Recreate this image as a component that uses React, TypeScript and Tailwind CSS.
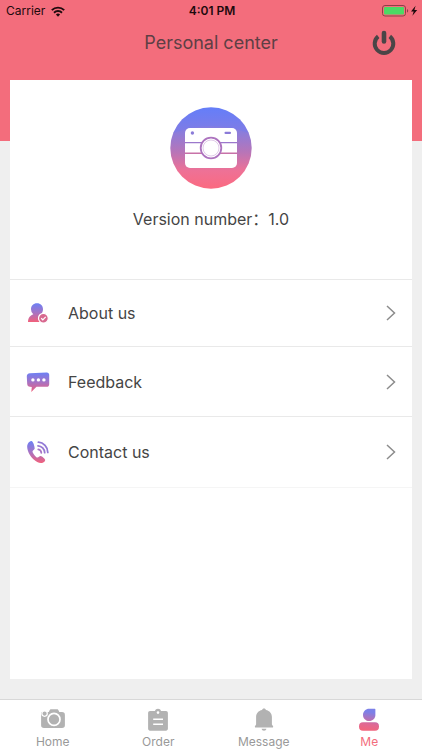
import React from 'react';
import { clsx } from 'clsx';

interface IconProps {
  className?: string;
}

interface MenuItem {
  label: string;
  icon: React.FC<IconProps>;
  rowClass: string;
}

interface TabItem {
  label: string;
  icon: React.FC<IconProps>;
  active?: boolean;
}

// Shared blue-to-pink gradient, each icon needs its own id
const BrandGradient = ({ id }: { id: string }) => (
  <defs>
    <linearGradient id={id} x1="0" y1="0" x2="0" y2="1">
      <stop offset="0" stopColor="#6c80f5" />
      <stop offset="0.5" stopColor="#a673c4" />
      <stop offset="1" stopColor="#f2607a" />
    </linearGradient>
  </defs>
);

const WifiIcon = ({ className }: IconProps) => (
  <svg viewBox="0 0 14 11" className={className} fill="none" stroke="#1d0a0d" strokeWidth="1.9">
    <path d="M0.8 4.1a8.9 8.9 0 0 1 12.4 0" />
    <path d="M3 6.7a5.7 5.7 0 0 1 8 0" />
    <path d="M7 10.7 4.9 8.5a3 3 0 0 1 4.2 0z" fill="#1d0a0d" stroke="none" />
  </svg>
);

const BatteryIcon = ({ className }: IconProps) => (
  <svg viewBox="0 0 36 12" className={className}>
    <rect x="0.5" y="0.5" width="23" height="10.5" rx="2.5" fill="none" stroke="#8f3f48" />
    <rect x="2" y="2" width="20" height="7.5" rx="1" fill="#4cd964" />
    <path d="M25 4v3.6c1.6-.5 1.6-3.1 0-3.6z" fill="#8f3f48" />
    <path d="M33.6 0.8 29 6.6h2.7l-1.3 4.2L35.2 5h-2.8z" fill="#1d0a0d" />
  </svg>
);

const PowerIcon = ({ className }: IconProps) => (
  <svg viewBox="0 0 24 26" className={className} fill="none" stroke="#4a4547">
    <path d="M6.2 6.4a9.3 9.3 0 1 0 11.6 0" strokeWidth="4" />
    <path d="M12 3v8.5" strokeWidth="4.6" strokeLinecap="round" />
  </svg>
);

const AppLogo = ({ className }: IconProps) => (
  <svg viewBox="0 0 82 82" className={className} role="img" aria-label="Camera logo">
    <defs>
      <linearGradient id="logo" x1="0" y1="0" x2="0" y2="1">
        <stop offset="0" stopColor="#667ff8" />
        <stop offset="0.3" stopColor="#8a7ddc" />
        <stop offset="0.55" stopColor="#b775b8" />
        <stop offset="0.78" stopColor="#ee7196" />
        <stop offset="1" stopColor="#fb6a80" />
      </linearGradient>
    </defs>
    <circle cx="41" cy="41" r="40.7" fill="url(#logo)" />
    <path d="M3.5 26Q41 12 78.5 26A40.7 40.7 0 0 0 3.5 26z" fill="#5f7cff" opacity="0.25" />
    <rect x="15" y="21" width="52" height="40" rx="5" fill="#fff" />
    <circle cx="22.4" cy="26" r="1.7" fill="#8b7bd8" />
    <rect x="54.5" y="24.8" width="6.5" height="2.2" rx="1" fill="#8b7bd8" />
    <path d="M15 35.6h52" stroke="#9b78cc" strokeWidth="1.4" />
    <path d="M15 46.2h52" stroke="#c872a8" strokeWidth="1.4" />
    <circle cx="41" cy="41" r="10.3" fill="#fff" stroke="#ad74bf" strokeWidth="1.8" />
    <circle cx="41" cy="41" r="8" fill="none" stroke="#d3b4de" strokeWidth="0.7" />
  </svg>
);

const AboutIcon = ({ className }: IconProps) => (
  <svg viewBox="0 0 24 24" className={className}>
    <BrandGradient id="about" />
    <path
      d="M11 2.3c3.6 0 6 2.6 6 5.9 0 2.2-.9 4-2.3 5.100 2.600.9 5.300 3.400 5.300 7.700H2c0-4.300 2.700-6.800 5.300-7.700A6.600 6.600 0 0 1 5 8.200c0-3.300 2.400-5.900 6-5.900z"
      fill="url(#about)"
    />
    <circle cx="17.4" cy="17.2" r="4.9" fill="#d8688f" stroke="#fff" strokeWidth="1.2" />
    <path d="m15.2 17.3 1.600 1.500 2.900-3" fill="none" stroke="#fff" strokeWidth="1.2" />
  </svg>
);

const FeedbackIcon = ({ className }: IconProps) => (
  <svg viewBox="0 0 24 24" className={className}>
    <BrandGradient id="feedback" />
    <path
      d="M4 3.2 20.5 2.4c1.7-.1 2.7.8 2.7 2.4v9.4c0 1.6-1 2.6-2.7 2.6h-10L5.3 22l.5-4.9-1.9-.3C2.3 16.6 1.400 15.800 1.200 14L.8 6.500C.7 4.500 1.900 3.300 4 3.200z"
      fill="url(#feedback)"
    />
    <circle cx="6.9" cy="9.9" r="1.7" fill="#fff" />
    <circle cx="12.4" cy="9.9" r="1.7" fill="#fff" />
    <circle cx="17.9" cy="9.9" r="1.7" fill="#fff" />
  </svg>
);

const ContactIcon = ({ className }: IconProps) => (
  <svg viewBox="0 0 24 24" className={className}>
    <BrandGradient id="contact" />
    <path
      d="M5.2 1C3 1.5 1 4 1.2 7.3c.3 4.4 3 9 6.2 12 3.2 2.900 6.500 4.500 9.300 3.500 1.300-.5 2.500-1.600 2.500-2.800 0-.8-3.200-3.700-4.500-3.900-1.300-.2-2.200 1.700-3.300 1.500-1.600-.3-4.900-4.600-4.900-6.200 0-1.200 2.200-1.700 2.200-3C8.700 6.800 7.200.7 5.200 1z"
      fill="url(#contact)"
    />
    <g fill="none" strokeWidth="1.8" strokeLinecap="round">
      <path d="M12.3 9.3c1.6.3 2.9 1.7 3 3.5" stroke="#a774c6" />
      <path d="M12 5.8c3.6.2 6.600 3 6.700 6.900" stroke="#9878d2" />
      <path d="M12.4 2.2c5.100.3 9.400 4.700 9.400 10.200" stroke="#9179d6" />
    </g>
  </svg>
);

const ChevronIcon = ({ className }: IconProps) => (
  <svg viewBox="0 0 10 16" className={className} fill="none" stroke="#8c8c8c" strokeWidth="1.5">
    <path d="m1 1 7.5 7L1 15" />
  </svg>
);

const HomeIcon = ({ className }: IconProps) => (
  <svg viewBox="0 0 24 24" className={className}>
    <path
      d="M8.5 2.500c.4-1 .9-1.300 1.800-1.300h5.600c.9 0 1.300.4 1.700 1.300l.7 1.600h2.700c1.900 0 2.900 1 2.900 2.800v10.300c0 1.800-1 2.800-2.900 2.800H3c-1.900 0-2.900-1-2.900-2.800V5.400c0-.8.5-1.300 1.300-1.300h6.400z"
      fill="#b2b2b2"
    />
    <circle cx="3.600" cy="5.600" r="2.700" fill="#b2b2b2" stroke="#fff" strokeWidth="1.200" />
    <circle cx="13" cy="11.400" r="6" fill="none" stroke="#fff" strokeWidth="1.700" />
  </svg>
);

const OrderIcon = ({ className }: IconProps) => (
  <svg viewBox="0 0 24 24" className={className}>
    <path
      d="M4 3h5c.4-1.300 1.500-2.200 3-2.200S14.600 1.700 15 3h5c1.100 0 1.900.8 1.900 1.900v15.900c0 1.100-.8 1.900-1.900 1.900H4c-1.100 0-1.900-.8-1.900-1.900V4.900C2.100 3.800 2.900 3 4 3z"
      fill="#b2b2b2"
    />
    <circle cx="12" cy="4.6" r="1.3" fill="#fff" />
    <path d="M7.2 11.3h9.8M7.2 16.3h9.8" stroke="#fff" strokeWidth="1.5" />
  </svg>
);

const MessageIcon = ({ className }: IconProps) => (
  <svg viewBox="0 0 24 24" className={className} fill="#b2b2b2">
    <path d="M12 .4c1.100 0 1.900.7 1.900 1.700 3.700.7 6 3.400 6 7v7.400l1 1.500c.6.8.3 1.500-.6 1.500H3.700c-.9 0-1.200-.7-.6-1.500l1-1.500V9.100c0-3.600 2.300-6.300 6-7 0-1 .8-1.700 1.900-1.700z" />
    <path d="M9.600 20.800h4.800c-.2 1.200-1.100 2-2.400 2s-2.200-.8-2.400-2z" />
  </svg>
);

const MeIcon = ({ className }: IconProps) => (
  <svg viewBox="0 0 24 24" className={className}>
    <defs>
      <linearGradient id="me" gradientUnits="userSpaceOnUse" x1="15" y1="1" x2="12" y2="23">
        <stop offset="0.15" stopColor="#7c80e8" />
        <stop offset="0.5" stopColor="#b870b4" />
        <stop offset="0.7" stopColor="#e06893" />
        <stop offset="1" stopColor="#f2647c" />
      </linearGradient>
    </defs>
    <path d="M12.2.8h5.600c.4 0 .6.2.6.600V7c0 3.400-2.800 6-6.200 6S6 10.300 6 6.900 8.800.8 12.200.8z" fill="url(#me)" />
    <rect x="2" y="14.200" width="20" height="8.600" rx="4" fill="url(#me)" />
  </svg>
);

const menuItems: MenuItem[] = [
  { label: 'About us', icon: AboutIcon, rowClass: 'h-[66px]' },
  { label: 'Feedback', icon: FeedbackIcon, rowClass: 'h-[69px]' },
  { label: 'Contact us', icon: ContactIcon, rowClass: 'h-[70px]' },
];

const tabs: TabItem[] = [
  { label: 'Home', icon: HomeIcon },
  { label: 'Order', icon: OrderIcon },
  { label: 'Message', icon: MessageIcon },
  { label: 'Me', icon: MeIcon, active: true },
];

const StatusBar = () => (
  <div className="grid grid-cols-3 items-center h-[22px] pl-1.5 pr-1 text-xs text-[#1d0a0d]">
    <div className="flex items-center gap-1.5">
      <span>Carrier</span>
      <WifiIcon className="w-3.5 h-[11px]" />
    </div>
    <span className="text-center font-semibold">4:01 PM</span>
    <BatteryIcon className="w-9 h-3 justify-self-end" />
  </div>
);

const App: React.FC = () => {
  return (
    <div className="flex flex-col min-h-screen bg-[#efefef] text-[#454545] font-[Inter,'Noto_Sans_CJK_SC',sans-serif]">
      <header className="bg-[#f36d7c] pb-[77px]">
        <StatusBar />
        <div className="grid grid-cols-[1fr_auto_1fr] items-center h-[42px] px-[26px]">
          <h1 className="col-start-2 text-lg text-[#5e3f45]">Personal center</h1>
          <button type="button" aria-label="Log out" className="justify-self-end">
            <PowerIcon className="w-6 h-[26px]" />
          </button>
        </div>
      </header>

      <main className="relative flex flex-col flex-1 -mt-[61px] mx-2.5 mb-5 bg-white">
        <section className="flex flex-col items-center h-[199px] pt-[27px] gap-5">
          <AppLogo className="w-[82px] h-[82px]" />
          <p className="text-base leading-5">Version number：1.0</p>
        </section>

        <ul className="border-b border-[#f5f5f5]">
          {menuItems.map(({ label, icon: Icon, rowClass }) => (
            <li key={label} className="border-t border-[#e9e9e9]">
              <button type="button" className={clsx('flex items-center w-full px-4 text-left', rowClass)}>
                <Icon className="w-6 h-6" />
                <span className="flex-1 ml-[18px] text-base">{label}</span>
                <ChevronIcon className="w-2.5 h-4" />
              </button>
            </li>
          ))}
        </ul>
      </main>

      <nav className="grid grid-cols-4 h-[51px] bg-white border-t border-[#d8d8d8]">
        {tabs.map(({ label, icon: Icon, active }) => (
          <a
            key={label}
            href="#"
            aria-current={active ? 'page' : undefined}
            className={clsx(
              'flex flex-col items-center pt-2 gap-0.5 text-xs',
              active ? 'text-[#f36d7c]' : 'text-[#999999]'
            )}
          >
            <Icon className="w-6 h-6" />
            <span>{label}</span>
          </a>
        ))}
      </nav>
    </div>
  );
};

export default App;
